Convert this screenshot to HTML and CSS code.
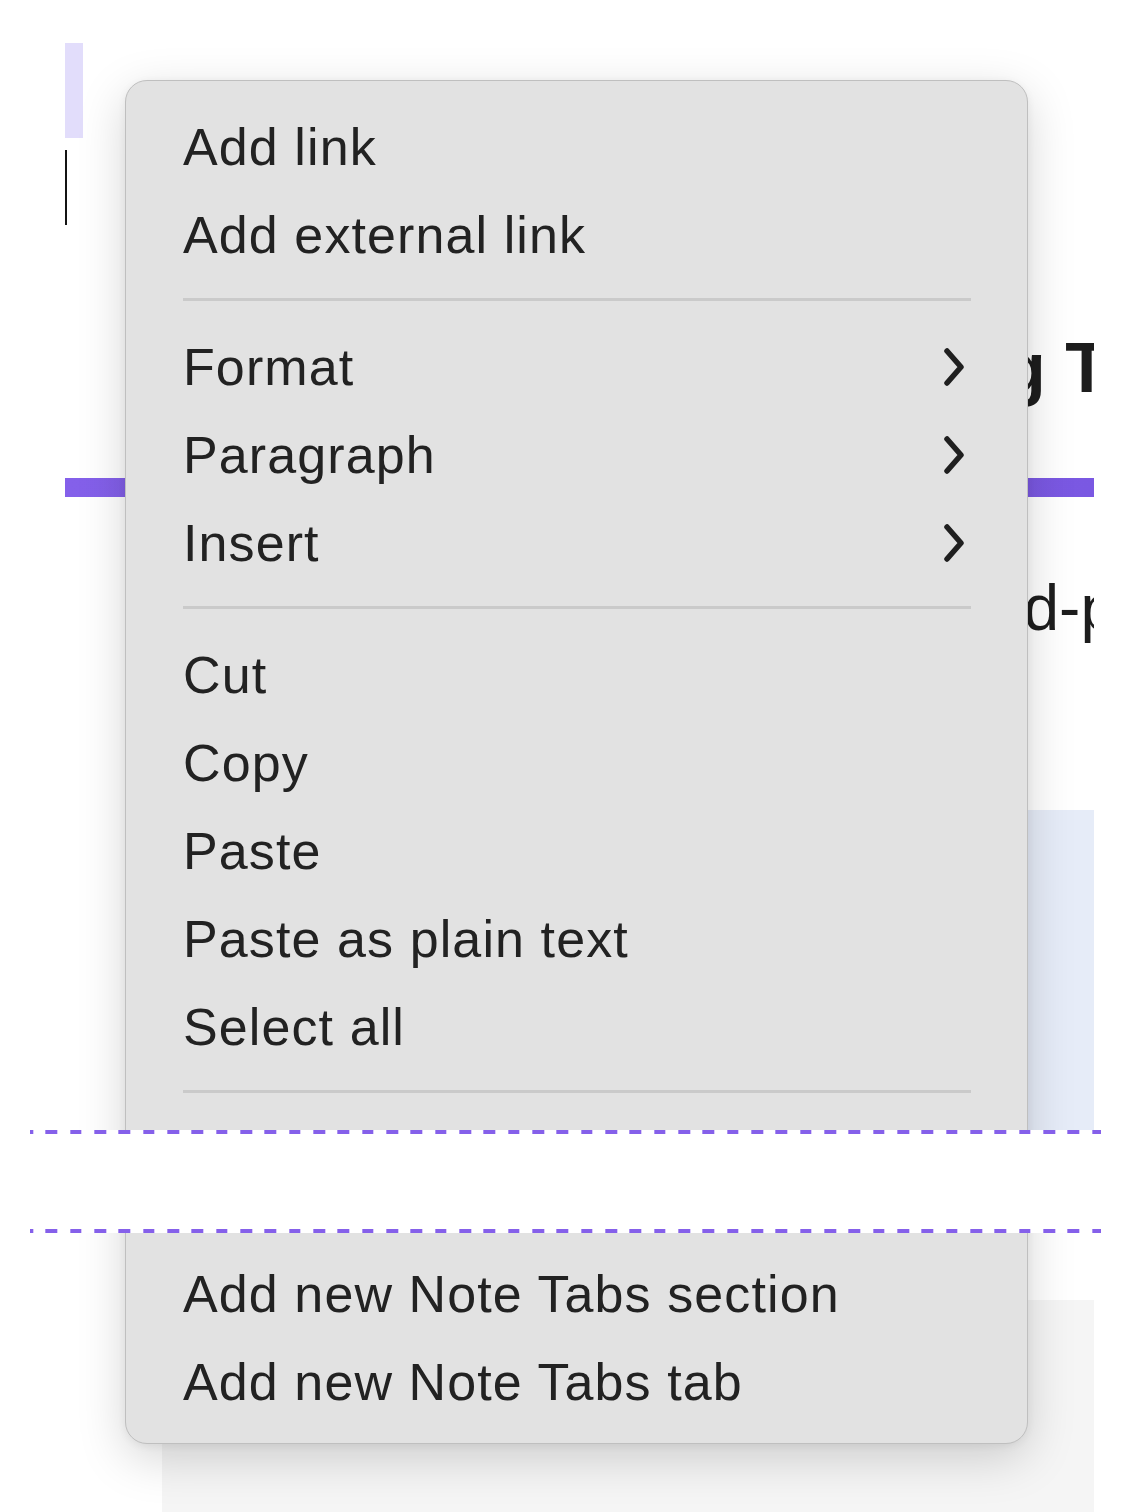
FILE: index.html
```html
<!DOCTYPE html>
<html lang="en">
<head>
<meta charset="utf-8">
<title>Context menu</title>
<link rel="stylesheet" href="styles.css">
</head>
<body>
<div class="viewport">
  <div class="doc">
    <div class="title-mark"></div>
    <div class="cursor"></div>
    <h1 class="heading">Getting T</h1>
    <div class="rule"></div>
    <p class="para">Build-p</p>
    <div class="callout"></div>
    <div class="grey-block"></div>
  </div>

  <div class="menu">
    <div class="item"><span>Add link</span></div>
    <div class="item"><span>Add external link</span></div>
    <div class="sep"></div>
    <div class="item"><span>Format</span><svg class="chev" viewBox="0 0 20 38"><path d="M3 3 L17 19 L3 35"/></svg></div>
    <div class="item"><span>Paragraph</span><svg class="chev" viewBox="0 0 20 38"><path d="M3 3 L17 19 L3 35"/></svg></div>
    <div class="item"><span>Insert</span><svg class="chev" viewBox="0 0 20 38"><path d="M3 3 L17 19 L3 35"/></svg></div>
    <div class="sep"></div>
    <div class="item"><span>Cut</span></div>
    <div class="item"><span>Copy</span></div>
    <div class="item"><span>Paste</span></div>
    <div class="item"><span>Paste as plain text</span></div>
    <div class="item"><span>Select all</span></div>
    <div class="sep"></div>
    <div class="gap"></div>
    <div class="item"><span>Add new Note Tabs section</span></div>
    <div class="item"><span>Add new Note Tabs tab</span></div>
  </div>
</div>
<div class="cut-band"></div>
</body>
</html>
```

FILE: styles.css
```css
html, body {
  margin: 0;
  padding: 0;
  background: #ffffff;
}

body {
  width: 1130px;
  height: 1512px;
  overflow: hidden;
  position: relative;
  font-family: "Liberation Sans", Arial, sans-serif;
}

.viewport {
  width: 1094px;
  height: 1512px;
  overflow: hidden;
  position: relative;
}

.doc {
  padding-left: 65px;
  display: flex;
  flex-direction: column;
}

.title-mark {
  margin-top: 43px;
  width: 18px;
  height: 95px;
  background: #e2ddfb;
}

.cursor {
  margin-top: 12px;
  width: 2px;
  height: 75px;
  background: #141414;
}

.heading {
  margin: 103px -14px 0 0;
  font-family: "Liberation Sans", Arial, sans-serif;
  font-weight: 700;
  font-size: 70px;
  line-height: 80px;
  height: 80px;
  color: #1d1d1d;
  text-align: right;
  white-space: nowrap;
}

.rule {
  margin-top: 70px;
  height: 19px;
  background: linear-gradient(90deg, #8460ea, #7a58e2);
}

.para {
  margin: 75px -22px 0 0;
  font-size: 64px;
  line-height: 72px;
  height: 72px;
  color: #1d1d1d;
  text-align: right;
  white-space: nowrap;
}

.callout {
  margin-top: 166px;
  margin-left: 240px;
  height: 330px;
  background: #e6ecf8;
}

.grey-block {
  margin-top: 160px;
  margin-left: 97px;
  height: 260px;
  background: #f5f5f5;
}

.menu {
  position: absolute;
  left: 125px;
  top: 80px;
  width: 903px;
  box-sizing: border-box;
  padding: 20px 56px 19px 57px;
  background: #e2e2e2;
  border: 1.5px solid #bfbfbf;
  border-radius: 22px;
  box-shadow: 0 14px 48px rgba(0, 0, 0, 0.17), 0 2px 8px rgba(0, 0, 0, 0.06);
  display: flex;
  flex-direction: column;
  color: #222222;
}

.item {
  height: 88px;
  box-sizing: border-box;
  padding-top: 4px;
  display: flex;
  align-items: center;
  justify-content: space-between;
  font-size: 52px;
  line-height: 84px;
  letter-spacing: 1.1px;
  white-space: nowrap;
}

.chev {
  width: 22px;
  height: 38px;
  margin-right: 6px;
  fill: none;
  stroke: #1f1f1f;
  stroke-width: 5.5;
  stroke-linecap: round;
  stroke-linejoin: round;
}

.sep {
  height: 44px;
  display: flex;
  align-items: center;
}

.sep::before {
  content: "";
  flex: 1;
  height: 3px;
  background: #cacaca;
}

.gap {
  height: 135px;
}

.cut-band {
  position: absolute;
  left: 0;
  top: 1130px;
  width: 1130px;
  height: 103px;
  background: #ffffff;
}

.cut-band::before,
.cut-band::after {
  content: "";
  position: absolute;
  left: 30px;
  width: 1071px;
  height: 4px;
  background: repeating-linear-gradient(90deg, #8560ea 0 11.7px, transparent 11.7px 24.33px);
  background-position: -8.7px 0;
}

.cut-band::before {
  top: 0;
}

.cut-band::after {
  bottom: 0;
}
```
